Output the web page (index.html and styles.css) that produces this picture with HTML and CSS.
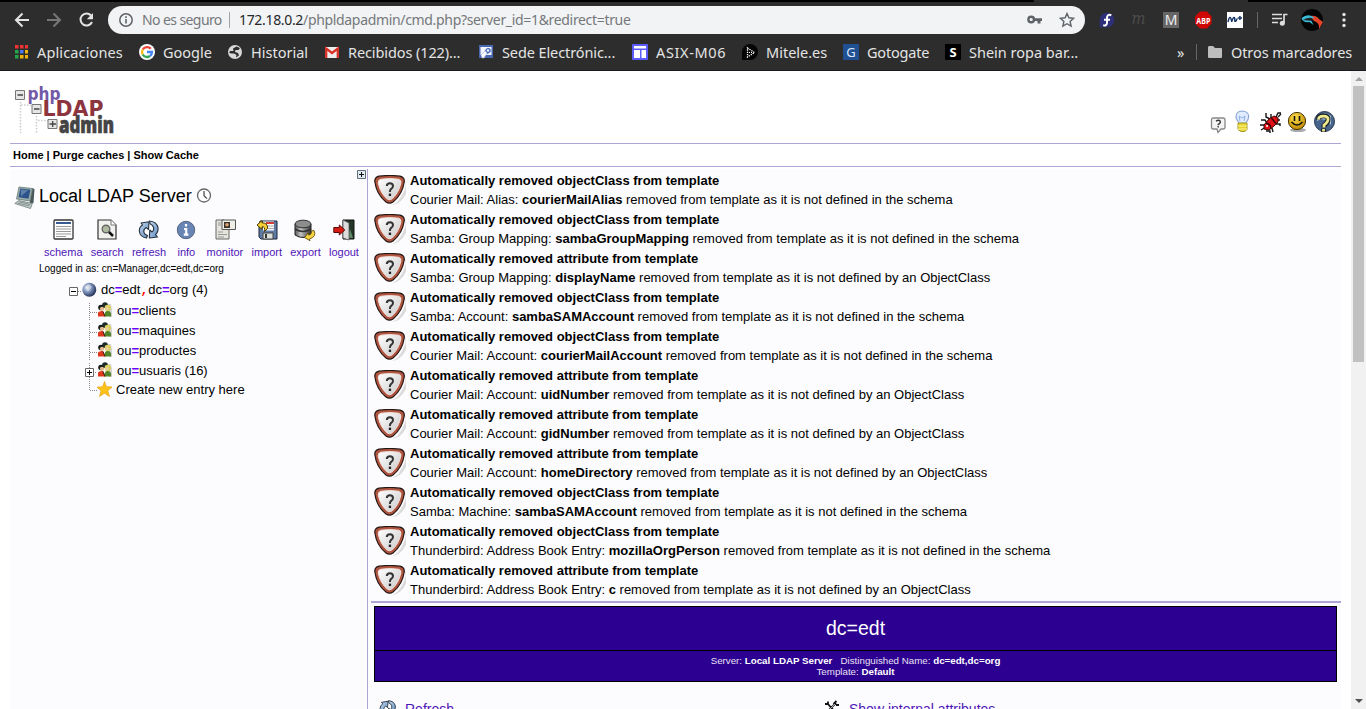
FILE: index.html
```html
<!DOCTYPE html>
<html lang="es">
<head>
<meta charset="utf-8">
<title>phpLDAPadmin</title>
<link rel="stylesheet" href="styles.css">
</head>
<body>
<svg class="defs" width="0" height="0">
  <defs>
    <linearGradient id="gsh" x2="1" y2="1"><stop offset="0" stop-color="#fff"/><stop offset="1" stop-color="#c9c9c9"/></linearGradient>
    <radialGradient id="gglobe" cx=".35" cy=".35" r=".7"><stop offset="0" stop-color="#e3eaf3"/><stop offset=".45" stop-color="#7e93bb"/><stop offset="1" stop-color="#1c2b50"/></radialGradient>
    <radialGradient id="gsmile" cx=".4" cy=".3" r=".7"><stop offset="0" stop-color="#ffe04a"/><stop offset="1" stop-color="#c08a00"/></radialGradient>
    <linearGradient id="gcyl"><stop offset="0" stop-color="#555"/><stop offset=".35" stop-color="#c4c4c4"/><stop offset="1" stop-color="#333"/></linearGradient>
    <linearGradient id="gblue" x2="1" y2="1"><stop offset="0" stop-color="#c3d6ea"/><stop offset="1" stop-color="#5f8dc4"/></linearGradient>
    <symbol id="shield" viewBox="0 0 32 31">
      <path d="M5 3 Q17 1 29 4 Q34 8 30 16 Q25 28 18 30 Q26 30 32 19 L32 8Z" fill="#aaa" opacity=".4"/>
      <path d="M5 1.200Q16-.2 26 1.200Q30.500 2.400 30.300 6.500Q28.500 19.500 19 27Q15.500 29.300 12 27Q2.500 19.500 .8 6.500Q.5 2.400 5 1.200Z" fill="#b0553f" stroke="#241614" stroke-width="1.200"/>
      <path d="M7 4.200Q16 3 24.500 4.200Q27.500 5 26.900 8Q24.500 18.500 17.800 24Q15.500 25.500 13.300 24Q6.500 18.500 4.200 8Q3.800 5 7 4.200Z" fill="url(#gsh)" stroke="#f3e2de"/>
      <path d="M12.800 11Q13 8.200 15.900 8.200Q19 8.200 19 11Q19 12.900 17 14Q15.900 15 15.900 17" fill="none" stroke="#333" stroke-width="2"/><rect x="14.800" y="18.600" width="2.300" height="2.400" fill="#222"/>
    </symbol>
    <symbol id="people" viewBox="0 0 16 16">
      <path d="M10 2h4l1 5v8h-3z" fill="#bbb" opacity=".6"/>
      <circle cx="8" cy="3.200" r="2.900" fill="#1d2b2a"/><circle cx="4" cy="5.500" r="2.800" fill="#171c1b"/><circle cx="5" cy="6.800" r="2.100" fill="#e0b98e"/>
      <path d="M1 14.500V10.500Q2.500 8.500 6 9L8 14.500Z" fill="#dc3a1c"/>
      <circle cx="10.800" cy="6" r="3.200" fill="#dcd060"/><circle cx="10" cy="6.800" r="1.800" fill="#e8d0a0"/>
      <path d="M7.500 14.500Q7 9 10.500 9Q15 9 14 14.500Z" fill="#55852a"/><path d="M6 9.500l2 5" stroke="#3b1008"/>
    </symbol>
    <symbol id="refresh" viewBox="0 0 22 22">
      <g fill="url(#gblue)" stroke="#26323f" stroke-width="1.100" stroke-linejoin="round">
        <path d="M8.500 19Q2 18 1.300 12Q1.200 8 4.500 6L3 4 11 2.800 10.500 10.500 8.300 8.600Q5.500 10 5.800 13Q6.200 15.500 9.500 16.500Z"/>
        <path d="M11.500 2Q18.500 2.500 20 8.500Q20.500 13 17.500 15.700L19.500 18 11.300 19 11.800 11 14 13Q16.400 11 15.500 8.200Q14.500 5.700 12 4.800Z"/>
      </g>
    </symbol>
  </defs>
</svg>

<header class="browser">
  <div class="tabstrip"></div>
  <div class="toolbar">
    <svg class="nav" width="94" height="28" viewBox="0 0 94 28" fill="none" stroke-width="2">
      <path d="M15 14H2M8.500 7.500L2 14l6.500 6.500" stroke="#e4e4e4"/>
      <path d="M33 14h13M39.500 7.500L46 14l-6.500 6.500" stroke="#777"/>
      <path d="M77 9.500A6 6 0 1 0 78 16" stroke="#e4e4e4"/><path d="M79 7v6.200h-6.200z" fill="#e4e4e4"/>
    </svg>
    <div class="omnibox">
      <svg width="14" height="14" viewBox="0 0 14 14"><circle cx="7" cy="7" r="6.200" fill="none" stroke="#5f6368" stroke-width="1.500"/><path d="M7 6v4.500M7 3.300v1.600" stroke="#5f6368" stroke-width="1.600"/></svg>
      <span class="insecure">No es seguro</span>
      <span class="bar"></span>
      <span class="url"><b>172.18.0.2</b>/phpldapadmin/cmd.php?server_id=1&amp;redirect=true</span>
      <svg class="key" width="16" height="10" viewBox="0 0 16 10"><circle cx="4.200" cy="4.500" r="2.800" fill="none" stroke="#5f6368" stroke-width="2.400"/><path d="M7 3.300h8v2.600h-1.500v2.600h-3V5.900H7z" fill="#5f6368"/></svg>
      <svg width="16" height="16" viewBox="0 0 16 16"><path d="M8 1.500l1.900 4.300 4.700.5-3.500 3.100 1 4.700L8 11.700 3.900 14.100l1-4.700L1.400 6.300l4.700-.5z" fill="none" stroke="#5f6368" stroke-width="1.400"/></svg>
    </div>
    <svg class="exts" width="261" height="28" viewBox="0 0 261 28">
      <circle cx="8" cy="14" r="7.300" fill="#2d2f78"/><path d="M.7 14v7.300H8z" fill="#2d2f78"/><path d="M12.300 9.300q-3.800-1.500-4.300 2.200v5.500q-.3 3-3.800 2.300M5 13.700h6" fill="none" stroke="#fff" stroke-width="2"/>
      <g transform="translate(8)">
        <text x="24.500" y="18" class="momentum" textLength="14" lengthAdjust="spacingAndGlyphs">m</text>
        <rect x="56" y="6" width="16" height="16" fill="#666"/><text x="64" y="19" class="mletter" text-anchor="middle">M</text>
        <path d="M93 6h7l4.500 5v7l-4.500 5h-7l-5-5v-7z" fill="#cf0606" transform="translate(0 -.5)"/><text x="96.300" y="17.500" class="abp" text-anchor="middle" textLength="14" lengthAdjust="spacingAndGlyphs">ABP</text>
        <rect x="120" y="6" width="16" height="16" fill="#fff"/><path d="M121 16q1-4.500 2-4.500t1.700 4.300q1.300-4.300 2.300-4.300t.8 3.500q1.700.8 2.200-2.500M130.800 12h4.200M132.900 9.900v4.200" fill="none" stroke="#173567" stroke-width="1.500"/>
        <path d="M150.500 6v16" stroke="#666"/>
        <path d="M165 8.500h10M165 12.500h10M165 16.500h6M177 17V8.500h3.500" stroke="#ddd" stroke-width="1.700" fill="none"/><circle cx="175.300" cy="17.300" r="2.500" fill="#ddd"/>
        <circle cx="205" cy="14" r="11" fill="#050505"/><path d="M203 10q6-1 9 3l4 3-4 7q1-6-5-8z" fill="#e64428"/><path d="M194.500 12q5-4 10-2l3 2-4 1 3 6-4-3q-7 1-8-4z" fill="#3bbad4"/><path d="M196 14q5-3 9-2l1 3z" fill="#222"/>
        <g fill="#e4e4e4"><circle cx="237" cy="8.500" r="1.700"/><circle cx="237" cy="14" r="1.700"/><circle cx="237" cy="19.500" r="1.700"/></g>
      </g>
    </svg>
  </div>
  <nav class="bookmarks">
    <span class="bm"><svg width="16" height="16" viewBox="0 0 16 16"><path d="M2 1h3.500v3.500H2zM7 1h3.500v3.500H7zM12 1h3v3.500h-3z" fill="#e33"/><path d="M2 6h3.500v3.500H2zM2 11h3.500v3.500H2z" fill="#24a64b"/><path d="M7 6h3.500v3.500H7z" fill="#4b78f0"/><path d="M12 6h3v3.500h-3zM7 11h3.500v3.500H7zM12 11h3v3.500h-3z" fill="#f2b50b"/></svg><span class="w1">Aplicaciones</span></span>
    <span class="bm"><svg width="16" height="16" viewBox="0 0 16 16"><circle cx="8" cy="8" r="8" fill="#fff"/><g fill="none" stroke-width="2.300"><path d="M11.800 4.800A5 5 0 0 0 3.700 5.500" stroke="#e94235"/><path d="M3.700 5.500a5 5 0 0 0 0 5" stroke="#fbbc04"/><path d="M3.700 10.500A5 5 0 0 0 11 12" stroke="#34a853"/><path d="M11 12q2-1.500 2-4H8" stroke="#4285f4"/></g></svg><span class="w2">Google</span></span>
    <span class="bm"><svg width="16" height="16" viewBox="0 0 16 16"><circle cx="8" cy="8" r="7" fill="#d8d8d8"/><path d="M9.500 2.500L6 4.500 6.500 7H3l-.8 2 2.300.5L7 9.500 9.500 11 9 13.500l3-2-1-2.500-3-1 .5-2h3l1.500-2z" fill="#2d2d2d"/></svg><span class="w3">Historial</span></span>
    <span class="bm"><svg width="16" height="16" viewBox="0 0 16 16"><path d="M1 3h14v11H1z" fill="#eee"/><path d="M2.200 14V4.500L8 9l5.800-4.500V14" fill="none" stroke="#d93025" stroke-width="2.300"/></svg><span class="w4">Recibidos (122)...</span></span>
    <span class="bm"><svg width="16" height="16" viewBox="0 0 16 16"><path d="M1 1h14v13H1z" fill="#4a68b0"/><path d="M2.500 3h11v8h-11z" fill="#f2f5fc"/><path d="M7 7q1-3.500 4-3 2.500 1 1.500 4l-3 2z" fill="#4268b8"/><circle cx="10" cy="6.500" r="1.300" fill="#f2f5fc"/><path d="M3 11l4-4 2 2-3 5H4z" fill="#fff" stroke="#9fb3dd" stroke-width=".6"/></svg><span class="w5">Sede Electrónic...</span></span>
    <span class="bm"><svg width="16" height="16" viewBox="0 0 16 16"><rect width="16" height="16" rx="1" fill="#5a5cff"/><path d="M2 2h12v2.500H2zM2 6h6v8H2zM9.500 6H14v8H9.500z" fill="#fff"/></svg><span class="w6">ASIX-M06</span></span>
    <span class="bm"><svg width="16" height="16" viewBox="0 0 16 16"><path d="M0 16V8a8 8 0 1 1 8 8z" fill="#050505"/><path d="M5.500 4l7 4.500-7 4.500z" fill="none" stroke="#fff" stroke-width="1.300" stroke-dasharray="1.300 1"/><path d="M7 8.500h4" stroke="#fff" stroke-dasharray="1 1"/></svg><span class="w7">Mitele.es</span></span>
    <span class="bm"><svg width="16" height="16"><rect width="16" height="16" fill="#204f92"/><text x="8" y="13" class="gg" text-anchor="middle">G</text></svg><span class="w8">Gotogate</span></span>
    <span class="bm"><svg width="16" height="16"><rect width="16" height="16" fill="#000"/><text x="8" y="13" class="ss" text-anchor="middle">S</text></svg><span class="w9">Shein ropa bar...</span></span>
    <span class="more">»</span>
    <span class="others"><svg width="16" height="14" viewBox="0 0 16 14"><path d="M1 2.500Q1 1 2 1h4l2 2h6q1 0 1 1v8q0 1-1 1H2q-1 0-1-1z" fill="#bdbdbd"/></svg><span class="w10">Otros marcadores</span></span>
  </nav>
</header>

<div class="viewport">
  <main class="page">
    <div class="masthead">
      <svg class="logo" width="104" height="54" viewBox="0 0 104 54">
        <g fill="none" stroke="#ccc" stroke-width="1.500" stroke-dasharray="1.500 1.500"><path d="M7.500 20v31M8 23h10M23.500 34v17M25 38.500h10"/></g>
        <text x="14.500" y="17.500" class="l-php" textLength="33" lengthAdjust="spacingAndGlyphs">php</text>
        <text x="29.500" y="33.500" class="l-ldap" textLength="61" lengthAdjust="spacingAndGlyphs">LDAP</text>
        <text x="46" y="50.500" class="l-admin" textLength="55" lengthAdjust="spacingAndGlyphs">admin</text>
        <g fill="#e6e6e6" stroke="#777"><path d="M2.500 8.500h9v9h-9zM19 22.500h9v9h-9zM35 37.500h9v9h-9z"/><path d="M4.500 13h5.500M21 27h5.500M36.500 42h6.500M39.700 39v6" stroke="#444" stroke-width="1.300"/></g>
      </svg>
      <svg class="status" width="128" height="26" viewBox="0 0 128 26">
        <path d="M3 8h10q2 0 2 2v7q0 2-2 2h-2l-3 3.500-1-3.500H3q-1.500 0-1.500-2v-7Q1.500 8 3 8z" fill="#f4f4f4" stroke="#888" stroke-width="1.300"/><path d="M6 11.300q2.500-2 4.300 0 .5 1.800-2.100 3v1M8.200 16v1.500" fill="none" stroke="#333" stroke-width="1.300"/>
        <path d="M32 1Q38.500 1.300 38.700 6.500q0 2.500-2.700 6.500h-7q-3-4-3-6.500Q26.200 1.300 32 1z" fill="#e2ecff" stroke="#91a8d8" stroke-width="1.200"/><path d="M30 11l-1-5 3 2 3-2-1 5" fill="none" stroke="#8caee8"/><path d="M28 13h9v6.500l-2 2h-4l-3-2z" fill="#e5d330" stroke="#a89b29"/><path d="M28 16h9M28 19h9" stroke="#fff79b"/>
        <g stroke="#161616" stroke-width="1.400" fill="none"><path d="M56 3v4l4 2M61 4v4M66 7l2-4h3M68 7l3-3M51 10h4l2 3M50 15h5M51 20l5-3M56 21h4v2M62 18l1 4M66 14h4v2M67 10h3"/></g><path d="M54 15l5-6 5-3 4 2v4l-4 4-5 4-5-1z" fill="#df1015" stroke="#400"/><path d="M56 13q5 1 5 6M61 7.500l5 6" fill="none" stroke="#310000" stroke-width="1.300"/><circle cx="57" cy="16" r="1" fill="#fff"/>
        <ellipse cx="88" cy="20" rx="8" ry="2" fill="#aaa"/><circle cx="87" cy="11" r="8.600" fill="url(#gsmile)" stroke="#463500"/><path d="M84.500 6v5M89.500 6v5M81.500 12q5.500 6 11 0" fill="none" stroke="#111" stroke-width="1.600"/>
        <circle cx="114.500" cy="11.500" r="10" fill="#47658b" stroke="#25364e"/><path d="M107 7q7-7 14-1v9q-7-9-14-4z" fill="#bdc9d6"/><path d="M108.500 9.500q0-3.800 5-3.800t4.500 3.800q0 3-4 6v2M113.500 18.500v3.500" fill="none" stroke="#17202a" stroke-width="5"/><path d="M108.500 9.500q0-3.300 5-3.300t4.500 3.300q0 2.500-4 5.500v2.500M113.500 19v2.500" fill="none" stroke="#efe98e" stroke-width="2.800"/>
      </svg>
    </div>
    <nav class="menu">Home | Purge caches | Show Cache</nav>
    <div class="panels">
      <aside class="tree-panel">
        <svg class="expand" width="9" height="9"><path d="M.5.500h8v8h-8z" fill="#e3ebf2" stroke="#5d7078"/><path d="M2 4.500h5M4.500 2v5" stroke="#111"/></svg>
        <div class="server">
          <svg width="22" height="25" viewBox="0 0 22 25"><path d="M18 3l2.500 1-1 14-4 1z" fill="#4a5a5c"/><path d="M5 2l13.500 1.500-2.500 12.500L2.500 14z" fill="#9baea8" stroke="#6a7977" stroke-width=".8"/><path d="M6.300 3.500l10.200 1.300-2 9L4.500 12.300z" fill="#2d548a"/><path d="M7 4.500l7 .8-7 6z" fill="#5f80ab"/><path d="M.8 18.500l4-3 13.500 3-1.800 5z" fill="#c5d0cd" stroke="#6d7c7a" stroke-width=".8"/><path d="M3.500 18l12 3M5 16.700l11.500 3" stroke="#83918f"/></svg>
          <h1>Local LDAP Server</h1>
          <svg width="16" height="16" viewBox="0 0 16 16"><circle cx="8" cy="7.500" r="6.500" fill="#fff" stroke="#666" stroke-width="1.300"/><path d="M8 3v4.700l3 3" fill="none" stroke="#444" stroke-width="1.200"/></svg>
        </div>
        <div class="tools">
          <a class="tool"><svg width="22" height="22" viewBox="0 0 22 22"><rect x="2" y="1" width="19" height="19" rx="1" fill="#fdfdfd" stroke="#333" stroke-width="1.300"/><path d="M4 4h15" stroke="#365a91" stroke-width="2"/><path d="M4 7.500h15M4 10h15M4 12.500h15M4 15h15M4 17.500h10" stroke="#999"/></svg>schema</a>
          <a class="tool"><svg width="22" height="22" viewBox="0 0 22 22"><path d="M2 1h13l5 5v14H2z" fill="#f1f1ee" stroke="#333" stroke-width="1.200"/><path d="M15 1v5h5" fill="#fff" stroke="#777"/><path d="M12.500 12.500l4.500 4.500" stroke="#111" stroke-width="2.500"/><circle cx="10" cy="10" r="3.800" fill="#aebb9f" stroke="#666" stroke-width="1.400"/></svg>search</a>
          <a class="tool"><svg width="22" height="22"><use href="#refresh"/></svg>refresh</a>
          <a class="tool info"><svg width="20" height="22" viewBox="0 0 20 22"><circle cx="10" cy="11" r="8.700" fill="#6885b4" stroke="#566580"/><path d="M10 5v2.500M8 10h2.200v5M7.800 15.700h4.600" stroke="#fff" stroke-width="2.200" fill="none"/></svg>info</a>
          <a class="tool"><svg width="22" height="22" viewBox="0 0 22 22"><path d="M2 1h8v8h5v11H2z" fill="#e5e5dc" stroke="#666"/><path d="M8 1h13.500v9.500H8z" fill="#eeeee6" stroke="#555"/><path d="M10 3h6v6h-6z" fill="#3c322c"/><circle cx="13" cy="5.700" r="1.800" fill="#d5a574"/><path d="M4 4h3M4 6h3M4 13h5M4 15.500h9M4 18h6" stroke="#999"/></svg>monitor</a>
          <a class="tool"><svg width="22" height="22" viewBox="0 0 22 22"><path d="M4 2h17v18H5L3 18V8z" fill="#5f7ba4" stroke="#17243b"/><path d="M7 2.500h11v9H7z" fill="#f8f8ff"/><path d="M10 4h8" stroke="#d13b38" stroke-width="2"/><path d="M10 7h8M10 9.500h8" stroke="#aaa"/><path d="M7 14h10v6H7z" fill="#dce0da" stroke="#444"/><path d="M10 15v4" stroke="#333" stroke-width="2"/><path d="M1 6l5-4.500v2.300q6 0 5.500 5.700l-3 3q1-5-2.500-4.700v2.700z" fill="#f4cf36" stroke="#4e3a00"/></svg>import</a>
          <a class="tool"><svg width="22" height="22" viewBox="0 0 22 22"><path d="M1 5v11q8 5 16 0V5z" fill="url(#gcyl)" stroke="#222"/><path d="M1 10q8 5 16 0" stroke="#333" fill="none" stroke-width="1.500"/><ellipse cx="9" cy="5" rx="8" ry="3.800" fill="#8d8d8d" stroke="#333"/><path d="M20 11.500q3 6-4.500 8.500l.5 1.700-5.500-3.200 3.700-4.500.6 2.200q3.500-1.200 2.500-4.200z" fill="#f4d33e" stroke="#554000" stroke-width=".8"/></svg>export</a>
          <a class="tool"><svg width="22" height="22" viewBox="0 0 22 22"><path d="M10 1h11v19H10z" fill="#233628" stroke="#111"/><path d="M17 10l3 9h-5z" fill="#5f8a67"/><path d="M10 1l6 3v17l-6-2z" fill="#dcdcdc" stroke="#555" stroke-width=".8"/><path d="M.8 8.500h5.500V6l5.500 5-5.500 5v-2.500H.8z" fill="#d51b12" stroke="#5c0803"/></svg>logout</a>
        </div>
        <div class="login">Logged in as: cn=Manager,dc=edt,dc=org</div>
        <div class="tree">
          <div class="node root"><svg width="13" height="20" viewBox="0 0 13 20"><path d="M.5 7.500h8v8h-8z" fill="#fff" stroke="#666"/><path d="M2 11.500h5" stroke="#000"/><path d="M9 11.500h4" stroke="#888" stroke-dasharray="1 1"/></svg><svg width="16" height="20" viewBox="0 0 16 20"><circle cx="7.300" cy="9.800" r="7" fill="url(#gglobe)"/><path d="M3 7l4-3 3 3-4 5z" fill="#fff" opacity=".35"/></svg><span>dc<b>=</b>edt<i>,</i>dc<b>=</b>org (4)</span></div>
          <div class="node"><svg width="13" height="20" viewBox="0 0 13 20"><path d="M5.500 3v17M6 12.500h7" stroke="#888" stroke-dasharray="1 1"/></svg><svg width="16" height="16"><use href="#people"/></svg><span>ou<b>=</b>clients</span></div>
          <div class="node"><svg width="13" height="20" viewBox="0 0 13 20"><path d="M5.500 3v17M6 12.500h7" stroke="#888" stroke-dasharray="1 1"/></svg><svg width="16" height="16"><use href="#people"/></svg><span>ou<b>=</b>maquines</span></div>
          <div class="node"><svg width="13" height="20" viewBox="0 0 13 20"><path d="M5.500 3v17M6 12.500h7" stroke="#888" stroke-dasharray="1 1"/></svg><svg width="16" height="16"><use href="#people"/></svg><span>ou<b>=</b>productes</span></div>
          <div class="node"><svg width="13" height="20" viewBox="0 0 13 20"><path d="M5.500 3v17M9 12.500h4" stroke="#888" stroke-dasharray="1 1"/><path d="M1.500 8.500h8v8h-8z" fill="#fff" stroke="#666"/><path d="M3 12.500h5M5.500 10v5" stroke="#000"/></svg><svg width="16" height="16"><use href="#people"/></svg><span>ou<b>=</b>usuaris (16)</span></div>
          <div class="node create"><svg width="13" height="20" viewBox="0 0 13 20"><path d="M5.500 0v11.500H13" fill="none" stroke="#888" stroke-dasharray="1 1"/></svg><svg width="16" height="16" viewBox="0 0 16 16"><path d="M7.500.5l2 5.200 5.500.3-4.200 3.700 1.700 5.800-5-3.300-5 3.300 1.500-5.800L0 6.200 5.500 5.700z" fill="#fcc21a" stroke="#e8a412" stroke-width=".7"/></svg><span>Create new entry here</span></div>
        </div>
      </aside>
      <section class="content">
        <div class="alerts">
          <div class="alert"><svg width="32" height="31"><use href="#shield"/></svg><div><h2>Automatically removed objectClass from template</h2><p>Courier Mail: Alias: <b>courierMailAlias</b> removed from template as it is not defined in the schema</p></div></div>
          <div class="alert"><svg width="32" height="31"><use href="#shield"/></svg><div><h2>Automatically removed objectClass from template</h2><p>Samba: Group Mapping: <b>sambaGroupMapping</b> removed from template as it is not defined in the schema</p></div></div>
          <div class="alert"><svg width="32" height="31"><use href="#shield"/></svg><div><h2>Automatically removed attribute from template</h2><p>Samba: Group Mapping: <b>displayName</b> removed from template as it is not defined by an ObjectClass</p></div></div>
          <div class="alert"><svg width="32" height="31"><use href="#shield"/></svg><div><h2>Automatically removed objectClass from template</h2><p>Samba: Account: <b>sambaSAMAccount</b> removed from template as it is not defined in the schema</p></div></div>
          <div class="alert"><svg width="32" height="31"><use href="#shield"/></svg><div><h2>Automatically removed objectClass from template</h2><p>Courier Mail: Account: <b>courierMailAccount</b> removed from template as it is not defined in the schema</p></div></div>
          <div class="alert"><svg width="32" height="31"><use href="#shield"/></svg><div><h2>Automatically removed attribute from template</h2><p>Courier Mail: Account: <b>uidNumber</b> removed from template as it is not defined by an ObjectClass</p></div></div>
          <div class="alert"><svg width="32" height="31"><use href="#shield"/></svg><div><h2>Automatically removed attribute from template</h2><p>Courier Mail: Account: <b>gidNumber</b> removed from template as it is not defined by an ObjectClass</p></div></div>
          <div class="alert"><svg width="32" height="31"><use href="#shield"/></svg><div><h2>Automatically removed attribute from template</h2><p>Courier Mail: Account: <b>homeDirectory</b> removed from template as it is not defined by an ObjectClass</p></div></div>
          <div class="alert"><svg width="32" height="31"><use href="#shield"/></svg><div><h2>Automatically removed objectClass from template</h2><p>Samba: Machine: <b>sambaSAMAccount</b> removed from template as it is not defined in the schema</p></div></div>
          <div class="alert"><svg width="32" height="31"><use href="#shield"/></svg><div><h2>Automatically removed objectClass from template</h2><p>Thunderbird: Address Book Entry: <b>mozillaOrgPerson</b> removed from template as it is not defined in the schema</p></div></div>
          <div class="alert"><svg width="32" height="31"><use href="#shield"/></svg><div><h2>Automatically removed attribute from template</h2><p>Thunderbird: Address Book Entry: <b>c</b> removed from template as it is not defined by an ObjectClass</p></div></div>
        </div>
        <div class="entry">
          <h3>dc=edt</h3>
          <div class="sub">Server: <b>Local LDAP Server</b> &nbsp; Distinguished Name: <b>dc=edt,dc=org</b><br>Template: <b>Default</b></div>
        </div>
        <div class="actions">
          <a><svg width="18" height="18"><use href="#refresh"/></svg>Refresh</a>
          <a><svg width="18" height="18" viewBox="0 0 18 18"><path d="M4 4l9 10M13 4L3 14M2 5h3V2.500M10.500 5l3-3M13 6h3" fill="none" stroke="#111" stroke-width="1.800"/><path d="M12 5l-5 5" stroke="#fff" stroke-width=".7"/></svg>Show internal attributes</a>
        </div>
      </section>
    </div>
  </main>
  <div class="scrollbar"><span class="up"></span><span class="thumb"></span><span class="down"></span></div>
</div>
</body>
</html>
```
FILE: styles.css
```css
* { box-sizing: border-box; }
html, body { height: 100%; overflow: hidden; }
body { margin: 0; display: flex; flex-direction: column; background: #fff; color: #000; font: 13px "Liberation Sans", Arial, sans-serif; }
svg { display: block; flex: none; }
h1, h2, h3, p { margin: 0; }
.defs { position: absolute; }

/* Browser chrome */
.browser { flex: none; height: 71px; background: #2d2d2d; border-bottom: 1px solid #1b1920; color: #e4e4e4; font: 14.5px/20px "Noto Sans", sans-serif; overflow: hidden; }
.tabstrip { height: 2px; width: 100%; background: linear-gradient(90deg, #000 1034px, #2d2d2d 1034px, #2d2d2d 1248px, #000 1248px); }
.toolbar { display: flex; height: 36px; padding: 4px 0 4px 14px; }
.omnibox { display: flex; align-items: center; width: 977px; height: 28px; padding: 0 10px 0 11px; border-radius: 14px; background: #f1f3f4; color: #75787b; font-size: 14px; }
.insecure { margin-left: 9px; width: 80px; white-space: nowrap; letter-spacing: -.59px; }
.bar { width: 1px; height: 16px; margin: 0 9px 0 7px; background: #a0a3a6; }
.url { flex: 1; white-space: nowrap; letter-spacing: -.33px; }
.url b { font-weight: 400; color: #26282b; }
.key { margin-right: 16px; }
.exts { margin-left: 14px; }
.momentum { font: italic 17px "DejaVu Serif", serif; fill: #4b4b4b; }
.mletter { font: 14px "Noto Sans", sans-serif; fill: #eee; }
.abp { font: bold 9px "Noto Sans", sans-serif; fill: #fff; }
.gg { font: 13px "Noto Sans", sans-serif; fill: #dce7ff; }
.ss { font: bold 13px "Noto Sans", sans-serif; fill: #fff; }
.bookmarks { display: grid; grid-template-columns: 126px 88px 97px 154px 154px 110px 101px 102px 232px 30px 1fr; align-items: center; height: 28px; padding-left: 13px; white-space: nowrap; }
.bm { display: flex; gap: 8px; align-items: center; }
.bm > span, .others > span, .more { margin-top: -1px; }
.w1 { letter-spacing: .13px; }
.w4, .w5 { letter-spacing: -.1px; }
.w6 { letter-spacing: .65px; }
.w8 { letter-spacing: -.2px; }
.w10 { letter-spacing: -.1px; }
.others { display: flex; gap: 8px; align-items: center; height: 16px; padding-left: 10px; margin-left: -11px; border-left: 1px solid #666; }

/* Page */
.viewport { flex: 1; min-height: 0; display: flex; overflow: hidden; }
.page { flex: 1; padding: 0 10px; }
.masthead { display: flex; justify-content: space-between; height: 73px; padding: 11px 3px 0 3px; border-bottom: 1px solid #aea4d5; }
.logo { overflow: visible; }
.l-php { font: bold 18px "DejaVu Sans", sans-serif; fill: #7258a6; }
.l-ldap { font: bold 20.5px "DejaVu Sans", sans-serif; fill: #8c353e; }
.l-admin { font: 800 22px "Open Sans", sans-serif; fill: #444; stroke: #444; stroke-width: .7px; }
.status { margin-top: 28px; }
.menu { height: 23px; padding-left: 3px; border-bottom: 1px solid #aea4d5; font-size: 11px; font-weight: bold; line-height: 22px; }
.panels { display: flex; margin-top: 2px; height: 540px; background: #fcfcfe; }
.tree-panel { width: 358px; border-right: 1px solid #aea4d5; position: relative; }
.expand { position: absolute; right: 1px; top: 1px; }
.server { display: flex; align-items: center; padding: 16px 0 0 4px; }
.server h1 { margin: -4px 4px 0 3px; font-size: 18px; font-weight: 400; line-height: 22px; }
.server svg:last-child { margin-top: -4px; }
.tools { display: flex; gap: 8.2px; padding: 9px 0 0 34px; color: #4e14b8; font-size: 11px; line-height: 13px; }
.tool { display: flex; flex-direction: column; align-items: center; gap: 5px; }
.info { padding: 0 2px; }
.login { padding: 4px 0 0 29px; font-size: 10px; line-height: 12px; }
.tree { padding: 5px 0 0 59px; }
.node { display: flex; align-items: center; height: 20px; padding-left: 15px; }
.node span { margin-left: 4px; }
.node b { color: #6a00ff; }
.node i { color: #f00; font: bold 13px "Liberation Mono", monospace; }
.root { padding-left: 0; }
.root span { margin-left: 3px; }
.create { margin-top: -1px; }
.create span { margin-left: 3px; }
.content { flex: 1; padding: 2px 0 0 3px; }
.alerts { height: 432px; border-bottom: 2px solid #aea4d5; }
.alert { display: flex; gap: 4px; height: 39px; padding-left: 3px; }
.alert svg { margin-top: 4px; }
.alert h2 { font-size: 13px; line-height: 20px; }
.alert p { line-height: 18px; }
.entry { margin: 3px 4px 0 3px; border: 1px solid #000; background: #2c0090; color: #fff; text-align: center; height: 76px; }
.entry h3 { height: 44px; border-bottom: 1px solid #000; font-size: 19.5px; font-weight: 400; line-height: 43px; }
.sub { padding-top: 4px; font-size: 9.75px; line-height: 11px; color: #e8e0f4; }
.sub b { color: #fff; }
.actions { display: grid; grid-template-columns: 444px 1fr; padding: 17px 0 0 8px; font-size: 14px; line-height: 20px; color: #4e14b8; }
.actions a { display: flex; gap: 8px; }
.scrollbar { flex: none; width: 15px; background: #f1f1f1; display: flex; flex-direction: column; align-items: center; }
.up { margin-top: 6px; border: 4px solid transparent; border-top: 0; border-bottom-color: #a3a3a3; }
.thumb { margin-top: 5px; width: 11px; height: 276px; background: #c1c1c1; }
.down { margin-top: auto; margin-bottom: 6px; border: 4px solid transparent; border-bottom: 0; border-top-color: #505050; }
```
